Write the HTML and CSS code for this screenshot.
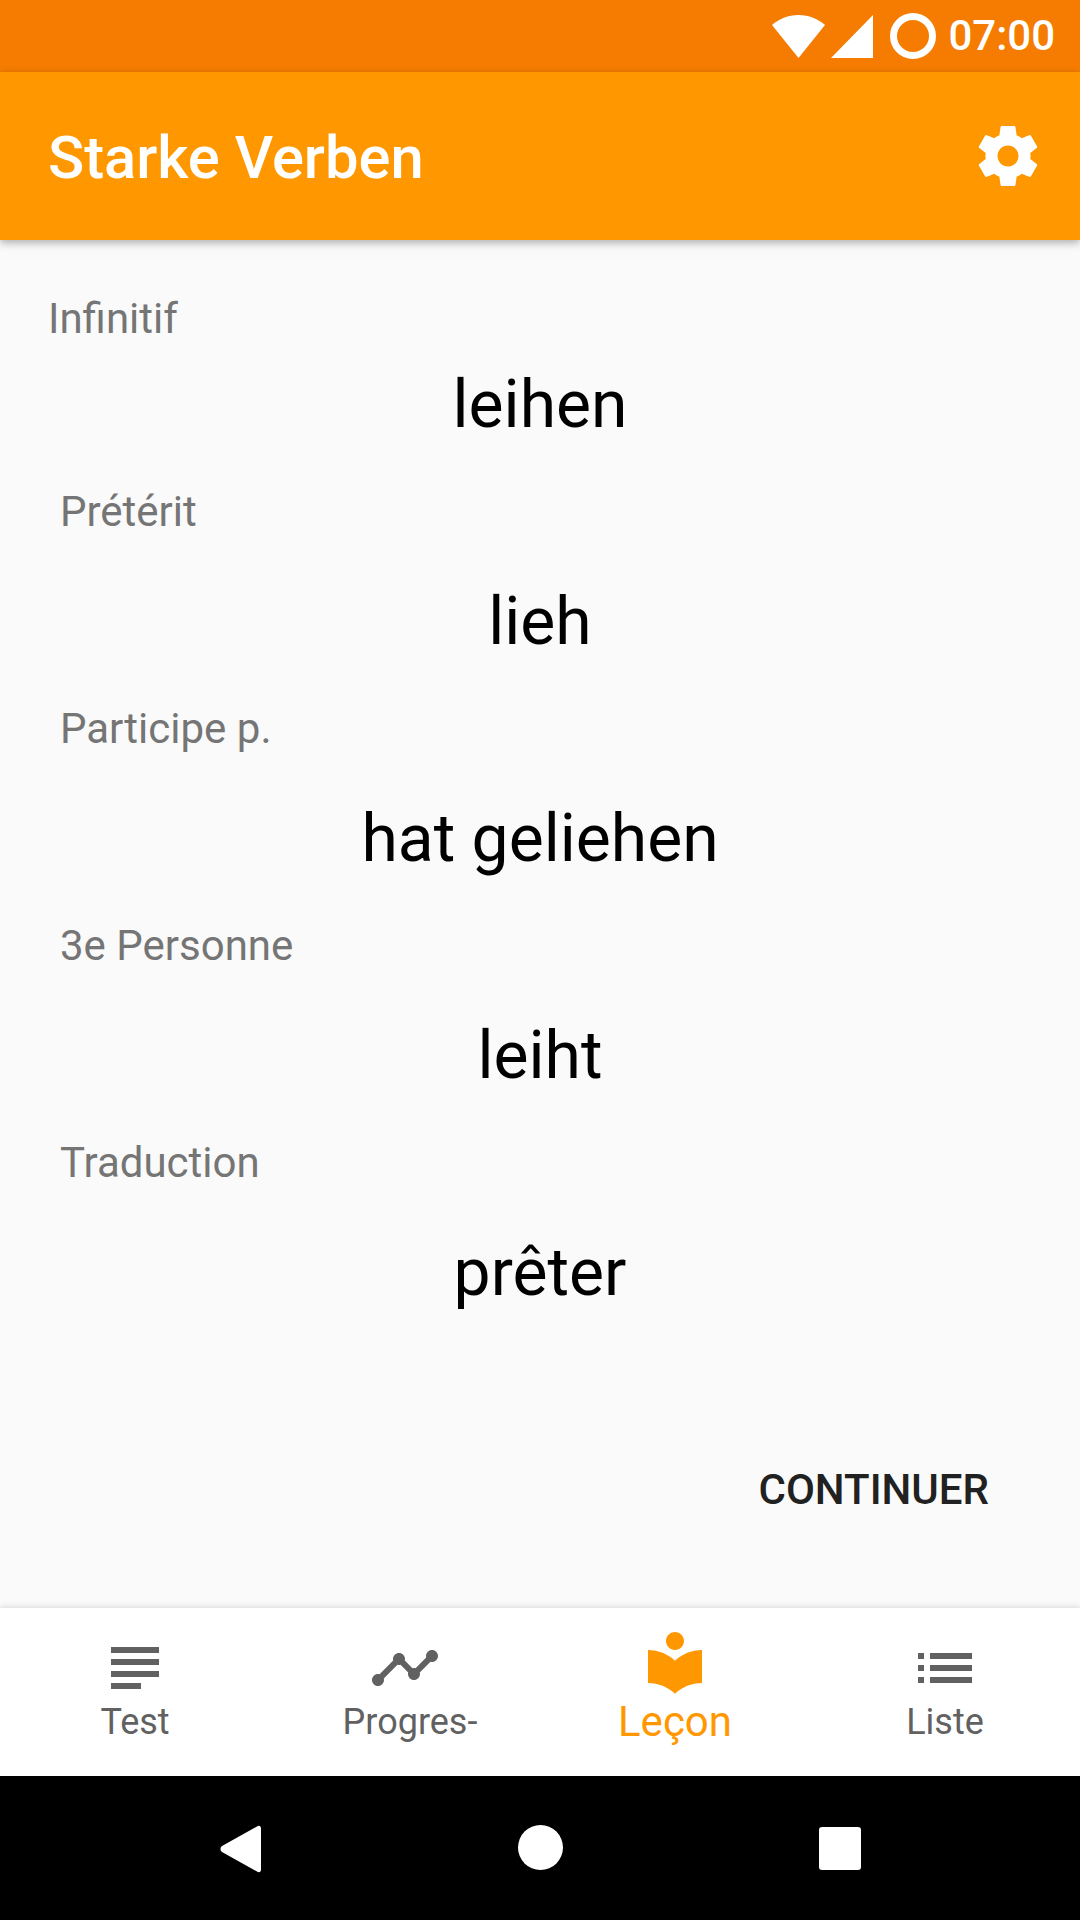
FILE: index.html
```html
<!DOCTYPE html>
<html lang="en">
<head>
    <meta charset="UTF-8">
    <meta name="viewport" content="width=device-width, initial-scale=1.0">
    <title>Starke Verben</title>
    <link rel="stylesheet" href="styles.css">
</head>
<body>
    <div class="status-bar">
        <svg class="status-wifi" width="53" height="43" viewBox="0 0 53 43"><path d="M0 10C7 4 16 0 26.500 0S46 4 53 10L26.500 43z"/></svg>
        <svg class="status-signal" width="42" height="43" viewBox="0 0 42 43"><path d="M42 0V43H0z"/></svg>
        <span class="status-ring"></span>
        <span class="status-time">07:00</span>
    </div>

    <header class="app-bar">
        <h1>Starke Verben</h1>
        <svg class="icon" viewBox="0 0 24 24"><path d="M19.430 12.980c.04-.32.07-.64.07-.98s-.03-.66-.07-.98l2.110-1.650c.19-.15.24-.42.12-.64l-2-3.460c-.12-.22-.39-.3-.61-.22l-2.490 1c-.52-.4-1.080-.73-1.690-.98l-.38-2.650C14.460 2.180 14.250 2 14 2h-4c-.25 0-.46.18-.49.42l-.38 2.650c-.61.25-1.170.59-1.690.98l-2.490-1c-.23-.09-.49 0-.61.22l-2 3.460c-.13.22-.07.49.12.64l2.110 1.650c-.04.32-.07.65-.07.98s.03.66.07.98l-2.110 1.650c-.19.15-.24.42-.12.64l2 3.460c.12.22.39.3.61.22l2.490-1c.52.4 1.080.73 1.690.98l.38 2.650c.03.24.24.42.49.42h4c.25 0 .46-.18.49-.42l.38-2.650c.61-.25 1.170-.59 1.690-.98l2.490 1c.23.09.49 0 .61-.22l2-3.460c.12-.22.07-.49-.12-.64l-2.110-1.650zM12 15.500c-1.930 0-3.500-1.570-3.500-3.500s1.570-3.500 3.500-3.500 3.500 1.570 3.500 3.500-1.570 3.500-3.500 3.500z"/></svg>
    </header>

    <main class="content">
        <div class="field field-first">
            <div class="field-label">Infinitif</div>
            <div class="field-value">leihen</div>
        </div>
        <div class="field">
            <div class="field-label">Prétérit</div>
            <div class="field-value">lieh</div>
        </div>
        <div class="field">
            <div class="field-label">Participe p.</div>
            <div class="field-value">hat geliehen</div>
        </div>
        <div class="field">
            <div class="field-label">3e Personne</div>
            <div class="field-value">leiht</div>
        </div>
        <div class="field">
            <div class="field-label">Traduction</div>
            <div class="field-value">prêter</div>
        </div>
        <div class="actions">
            <button type="button" class="continue-btn">CONTINUER</button>
        </div>
    </main>

    <nav class="bottom-nav">
        <div class="nav-item">
            <svg class="icon" viewBox="0 0 24 24"><path d="M14 17H4v2h10v-2zm6-8H4v2h16V9zM4 15h16v-2H4v2zM4 5v2h16V5H4z"/></svg>
            <span class="nav-label">Test</span>
        </div>
        <div class="nav-item">
            <svg class="icon" viewBox="0 0 24 24"><path d="M23 8c0 1.100-.9 2-2 2-.18 0-.35-.02-.51-.07l-3.560 3.550c.05.16.07.34.07.52 0 1.100-.9 2-2 2s-2-.9-2-2c0-.18.02-.36.07-.52l-2.550-2.550c-.16.05-.34.07-.52.07s-.36-.02-.52-.07l-4.550 4.560c.05.16.07.33.07.51 0 1.100-.9 2-2 2s-2-.9-2-2 .9-2 2-2c.18 0 .35.02.51.07l4.560-4.550C8.020 9.360 8 9.180 8 9c0-1.100.9-2 2-2s2 .9 2 2c0 .18-.02.36-.07.52l2.550 2.550c.16-.05.34-.07.52-.07s.36.02.52.07l3.550-3.560C19.020 8.350 19 8.180 19 8c0-1.100.9-2 2-2s2 .9 2 2z"/></svg>
            <span class="nav-label nav-label-long">Progres-</span>
        </div>
        <div class="nav-item nav-item-active">
            <svg class="icon" viewBox="0 0 24 24"><path d="M12 11.550C9.640 9.350 6.480 8 3 8v11c3.480 0 6.640 1.350 9 3.550 2.360-2.190 5.520-3.550 9-3.550V8c-3.480 0-6.640 1.350-9 3.550zM12 8c1.660 0 3-1.340 3-3s-1.340-3-3-3-3 1.340-3 3 1.340 3 3 3z"/></svg>
            <span class="nav-label">Leçon</span>
        </div>
        <div class="nav-item">
            <svg class="icon" viewBox="0 0 24 24"><path d="M3 13h2v-2H3v2zm0 4h2v-2H3v2zm0-8h2V7H3v2zm4 4h14v-2H7v2zm0 4h14v-2H7v2zM7 7v2h14V7H7z"/></svg>
            <span class="nav-label">Liste</span>
        </div>
    </nav>

    <div class="system-nav">
        <svg width="42" height="48" viewBox="0 0 42 48"><path d="M37 1.500C39 0 41 1 41 3.500V44.500C41 47 39 48 37 46.500L2 27C0 25.500 0 22.500 2 21z"/></svg>
        <span class="system-home"></span>
        <span class="system-recent"></span>
    </div>
</body>
</html>
```

FILE: styles.css
```css
* {
    box-sizing: border-box;
}
body {
    font-family: Roboto, "Noto Sans", sans-serif;
    margin: 0;
    width: 1080px;
    height: 1920px;
    display: flex;
    flex-direction: column;
    background-color: #fafafa;
    overflow: hidden;
}
.icon {
    width: 72px;
    height: 72px;
    display: block;
    flex-shrink: 0;
}

/* status bar */
.status-bar {
    height: 72px;
    background-color: #f57c00;
    display: flex;
    align-items: center;
    padding-right: 25px;
    justify-content: flex-end;
    color: white;
}
.status-bar svg {
    fill: white;
}
.status-wifi {
    margin-right: 6px;
}
.status-signal {
    margin-right: 17px;
}
.status-ring {
    width: 46px;
    height: 46px;
    border: 7px solid white;
    border-radius: 50%;
    margin-right: 12px;
}
.status-time {
    font-size: 42px;
    font-weight: 500;
    line-height: 72px;
}

/* app bar */
.app-bar {
    height: 168px;
    background-color: #ff9800;
    display: flex;
    align-items: center;
    justify-content: space-between;
    padding: 0 36px 0 48px;
    box-shadow: 0 3px 8px rgba(0, 0, 0, 0.3);
    position: relative;
}
.app-bar h1 {
    margin: 4px 0 0;
    font-size: 59.700px;
    font-weight: 500;
    color: white;
}
.app-bar .icon {
    fill: white;
}

/* word forms */
.content {
    flex: 1;
    padding-top: 30px;
    display: flex;
    flex-direction: column;
}
.field {
    padding-top: 20px;
    height: 217px;
}
.field-first {
    padding-top: 21px;
    height: 194px;
}
.field-label {
    font-size: 42px;
    line-height: 56px;
    color: #757575;
    padding-left: 60px;
}
.field-first .field-label {
    padding-left: 48px;
}
.field-value {
    font-size: 66px;
    line-height: 116px;
    color: black;
    text-align: center;
    margin-top: 24px;
}
.field-first .field-value {
    margin-top: 0;
}
.actions {
    margin-top: auto;
    padding: 0 91px 90px 0;
    display: flex;
    justify-content: flex-end;
}
.continue-btn {
    font-family: inherit;
    font-size: 42px;
    font-weight: 500;
    line-height: 56px;
    color: #212121;
    background: none;
    border: none;
    padding: 0;
}

/* bottom navigation */
.bottom-nav {
    height: 168px;
    background-color: white;
    display: grid;
    grid-template-columns: repeat(4, 270px);
    box-shadow: 0 -1px 6px rgba(0, 0, 0, 0.14);
    position: relative;
}
.nav-item {
    display: flex;
    flex-direction: column;
    align-items: center;
    padding-top: 24px;
    fill: #616161;
    color: #616161;
}
.nav-label {
    font-size: 36px;
    line-height: 36px;
}
.nav-label-long {
    margin-left: 10px;
}
.nav-item-active {
    padding-top: 18px;
    fill: #ff9800;
    color: #ff9800;
}
.nav-item-active .nav-label {
    font-size: 42px;
    line-height: 48px;
}

/* system navigation */
.system-nav {
    height: 144px;
    background-color: black;
    display: flex;
    align-items: flex-start;
    padding: 49px 219px 0 220px;
    justify-content: space-between;
    fill: white;
}
.system-home {
    width: 45px;
    height: 45px;
    border-radius: 50%;
    background-color: white;
}
.system-recent {
    width: 42px;
    height: 43px;
    margin-top: 2px;
    border-radius: 3px;
    background-color: white;
}
```
